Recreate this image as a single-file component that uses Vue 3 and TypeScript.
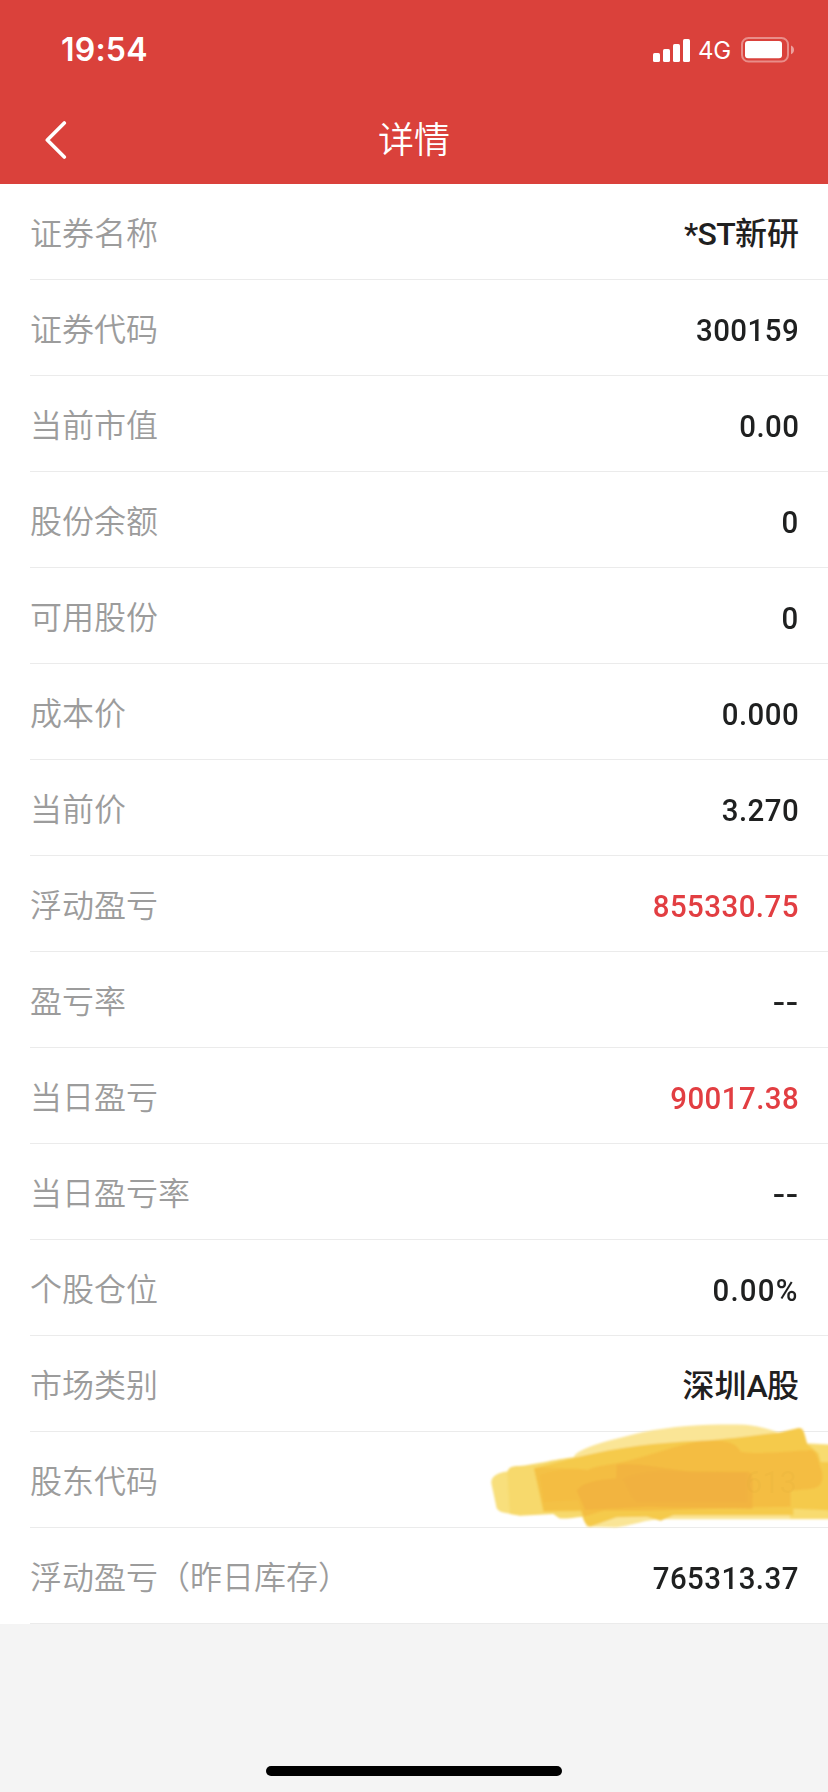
<script setup lang="ts">
interface Row {
  label: string
  value: string
  kind?: 'up' | 'text' | 'dash' | 'percent'
  marked?: boolean
}

const rows: Row[] = [
  { label: '证券名称', value: '*ST新研', kind: 'text' },
  { label: '证券代码', value: '300159' },
  { label: '当前市值', value: '0.00' },
  { label: '股份余额', value: '0' },
  { label: '可用股份', value: '0' },
  { label: '成本价', value: '0.000' },
  { label: '当前价', value: '3.270' },
  { label: '浮动盈亏', value: '855330.75', kind: 'up' },
  { label: '盈亏率', value: '--', kind: 'dash' },
  { label: '当日盈亏', value: '90017.38', kind: 'up' },
  { label: '当日盈亏率', value: '--', kind: 'dash' },
  { label: '个股仓位', value: '0.00%', kind: 'percent' },
  { label: '市场类别', value: '深圳A股', kind: 'text' },
  { label: '股东代码', value: '613', marked: true },
  { label: '浮动盈亏（昨日库存）', value: '765313.37' },
]

// Latin runs are set slightly tighter than the Chinese characters beside them.
function runs(value: string): { text: string; latin: boolean }[] {
  return (value.match(/[\x21-\x7e]+|[^\x21-\x7e]+/g) ?? []).map((text) => ({
    text,
    latin: /^[\x21-\x7e]/.test(text),
  }))
}
</script>

<template>
  <div class="screen">
    <header class="header">
      <div class="status">
        <span class="time">19:54</span>
        <div class="indicators">
          <svg class="signal" viewBox="0 0 37 23" width="37" height="23" fill="#fff">
            <rect x="0" y="14" width="7" height="9" rx="1.6" />
            <rect x="10" y="10" width="7" height="13" rx="1.6" />
            <rect x="20" y="5" width="7" height="18" rx="1.6" />
            <rect x="30" y="0" width="7" height="23" rx="1.6" />
          </svg>
          <span class="network">4G</span>
          <svg class="battery" viewBox="0 0 54 26" width="54" height="26">
            <rect x="1" y="1" width="46" height="23.500" rx="6.500" fill="none" stroke="#fff" stroke-opacity=".4" stroke-width="2" />
            <rect x="4" y="4" width="37" height="17.200" rx="3" fill="#fff" />
            <path d="M50 8.500C52 9.300 53 10.800 53 12.800S52 16.400 50 17.200Z" fill="#fff" fill-opacity=".5" />
          </svg>
        </div>
      </div>
      <div class="navbar">
        <svg class="back" viewBox="0 0 22 38" width="22" height="38" fill="none" stroke="#fff" stroke-width="3.600" stroke-linecap="round" stroke-linejoin="round">
          <path d="M19.300 2 2.300 19 19.300 36" />
        </svg>
        <h1 class="title">详情</h1>
      </div>
    </header>

    <main class="list">
      <div v-for="row in rows" :key="row.label" class="row">
        <span class="label">{{ row.label }}</span>
        <span v-if="!row.marked" class="value" :class="row.kind"><span v-for="run in runs(row.value)" :key="run.text" :class="{ latin: run.latin }">{{ run.text }}</span></span>
        <svg v-else class="marker" viewBox="0 0 1074 450" width="358" height="150">
          <defs>
            <filter id="soft" x="-5%" y="-5%" width="110%" height="110%"><feGaussianBlur stdDeviation="3.500" /></filter>
          </defs>
          <g filter="url(#soft)">
            <path fill="#fae596" d="M312 170C325 145 400 125 520 96C620 76 730 72 825 74C870 77 900 90 930 98L1010 130L1090 134V358H560C510 364 460 384 425 382L350 380L335 340Z" />
            <path fill="#f8df7c" d="M64 250C62 228 85 218 115 214L230 200L250 335L150 346C120 340 90 342 80 325Z" />
            <path fill="#f7d96c" d="M112 222C112 198 130 198 155 197C205 192 240 180 320 170L340 350C310 352 285 358 268 355L250 342L150 347L120 342Z" />
            <path fill="#f8db70" d="M1010 132L1090 136V356H960V300Z" />
            <path fill="#f5ca4c" d="M192 205L320 172C450 140 560 128 690 122C780 118 860 104 925 98L985 84C1002 82 1002 98 1012 132L1045 160L1052 186L1090 187V332L970 326V346H610L572 362L530 350L440 352L360 380C340 374 340 350 332 334L220 335Z" />
            <path fill="#f4c145" d="M192 205L212 202L350 208L340 330L222 332Z" />
            <path fill="#f4bd42" d="M210 225C260 208 330 205 350 212C370 198 420 194 440 190C530 172 620 134 690 124C760 120 795 122 812 155C860 164 960 154 1025 150C1045 158 1045 190 1055 210C1064 245 1050 264 1025 266L962 272V320L850 322L540 332L400 332L342 350L325 300L222 305Z" />
            <path fill="#f2b13f" fill-opacity=".75" d="M320 272C335 245 400 236 438 236L440 194C520 186 610 212 670 215H835C852 220 848 250 848 326L530 320L346 330Z" />
            <path fill="#f0ae40" fill-opacity=".5" d="M460 238C520 205 650 215 830 220V305H500C480 290 475 260 460 238Z" />
          </g>
          <text class="ghost" x="980" y="278" text-anchor="end">{{ row.value }}</text>
        </svg>
      </div>
    </main>

    <footer class="footer"><div class="home-bar"></div></footer>
  </div>
</template>

<style>
body {
  margin: 0;
  background: #f4f4f4;
}
</style>

<style scoped>
.screen {
  width: 828px;
  height: 1792px;
  display: flex;
  flex-direction: column;
  overflow: hidden;
  background: #f4f4f4;
  font-family: Roboto, "Noto Sans CJK SC", sans-serif;
}
.header {
  height: 184px;
  background: #da413b;
  color: #fff;
}
.status {
  height: 96px;
  display: flex;
  justify-content: space-between;
  align-items: center;
  padding: 4px 33px 0 61px;
  box-sizing: border-box;
}
.time {
  font: 600 32px/40px Inter, sans-serif;
  letter-spacing: 0.2px;
}
.indicators {
  display: flex;
  align-items: center;
}
.network {
  width: 51px;
  padding: 2px 0 0 8px;
  box-sizing: border-box;
  font: 400 24px/26px Inter, sans-serif;
  letter-spacing: -0.2px;
}
.navbar {
  height: 88px;
  display: grid;
  grid-template-columns: 100px 1fr 100px;
  align-items: center;
}
.back {
  margin-left: 45px;
}
.title {
  margin: 0;
  padding-bottom: 7px;
  text-align: center;
  font: 350 36px/52px "Noto Sans CJK SC", sans-serif;
}
.list {
  background: #fff;
}
.row {
  position: relative;
  height: 96px;
  box-sizing: border-box;
  padding-right: 29px;
  margin-left: 30px;
  border-bottom: 1px solid #ebebeb;
  display: flex;
  justify-content: space-between;
  align-items: center;
}
.label {
  padding-bottom: 2px;
  font: 350 32px/48px "Noto Sans CJK SC", sans-serif;
  color: #9c9c9c;
}
.value {
  font-size: 32px;
  font-weight: 500;
  line-height: 48px;
  color: #1f2020;
  letter-spacing: 0.5px;
  transform: scaleX(0.92);
  transform-origin: right;
  padding-top: 5px;
}
.value.text {
  transform: none;
  letter-spacing: 0;
}
.value.text .latin {
  letter-spacing: -0.7px;
}
.value.dash {
  transform: scaleX(1.14);
}
.value.percent {
  letter-spacing: 1.3px;
}
.value.up {
  color: #e23e42;
}
.marker {
  position: absolute;
  left: 440px;
  top: -32px;
}
.ghost {
  font-size: 92px;
  font-weight: 400;
  fill: #d9a636;
  fill-opacity: 0.13;
}
.footer {
  flex: 1;
  display: flex;
  justify-content: center;
  align-items: flex-end;
  padding-bottom: 16px;
}
.home-bar {
  width: 296px;
  height: 10px;
  border-radius: 5px;
  background: #000;
}
</style>
